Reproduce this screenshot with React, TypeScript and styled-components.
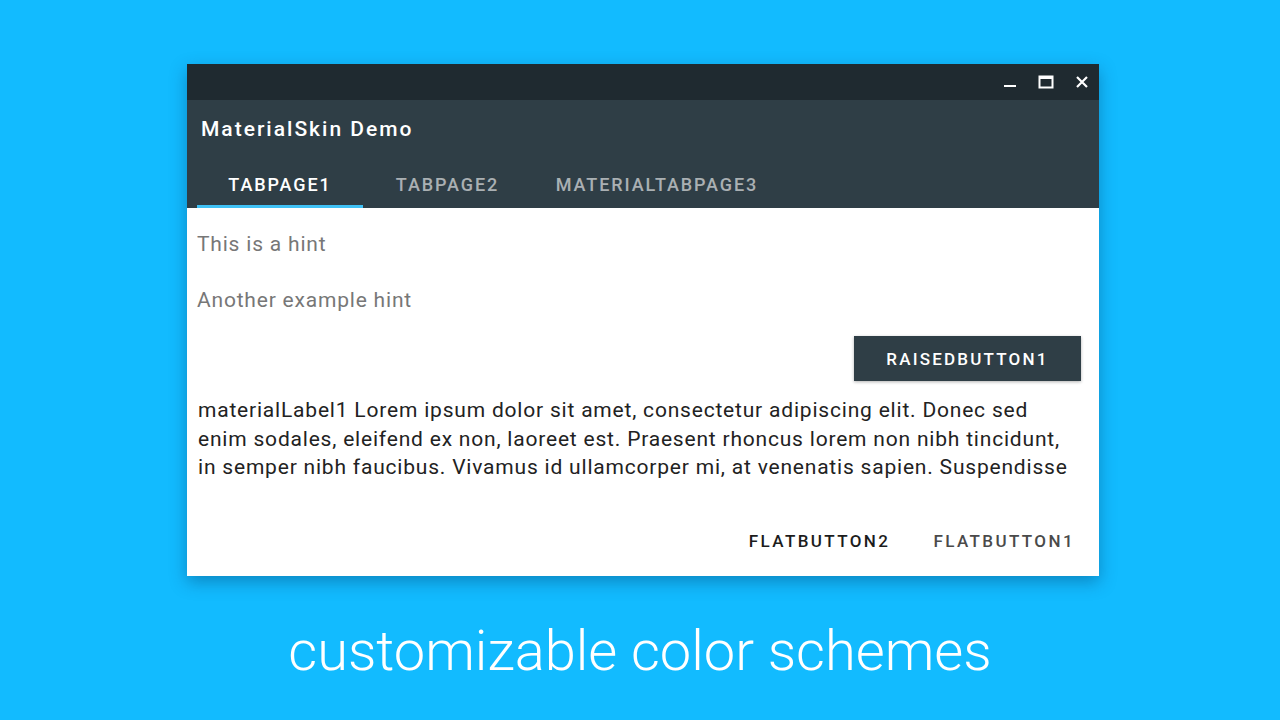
import React from "react";
import styled, { createGlobalStyle } from "styled-components";

const sky = "#12BBFF";
const title_bar = "#1F2A30";
const primary = "#2F3E46";
const accent = "#3FC1F5";

const GlobalStyle = createGlobalStyle`
    html, body {
        margin: 0;
        padding: 0;
        background: ${sky};
        font-family: Roboto, "Liberation Sans", sans-serif;
    }
`;

const Page = styled.div`
    width: 1280px;
    height: 720px;
    background: ${sky};
    display: flex;
    flex-direction: column;
    padding-top: 64px;
    box-sizing: border-box;
`;

const Window = styled.div`
    margin-left: 187px;
    width: 912px;
    height: 512px;
    background: #ffffff;
    display: flex;
    flex-direction: column;
    box-shadow: 0 6px 16px rgba(0, 40, 80, 0.35);
`;

const TitleBar = styled.div`
    height: 36px;
    background: ${title_bar};
    display: flex;
    align-items: center;
    justify-content: flex-end;
    gap: 16px;
    padding-right: 7px;
`;

const ControlButton = styled.div`
    width: 20px;
    height: 20px;
    display: flex;
    align-items: center;
    justify-content: center;
`;

const ActionBar = styled.div`
    background: ${primary};
    height: 108px;
    display: flex;
    flex-direction: column;
`;

const Title = styled.div`
    color: #ffffff;
    font-size: 21px;
    font-weight: 500;
    letter-spacing: 2px;
    padding: 17px 0 0 14px;
    height: 40px;
`;

const Tabs = styled.div`
    margin-top: auto;
    display: flex;
    padding-left: 10px;
`;

const Tab = styled.div<{ $active?: boolean; $width: number }>`
    width: ${(p) => p.$width}px;
    height: 52px;
    box-sizing: border-box;
    display: flex;
    align-items: center;
    justify-content: center;
    padding-top: 8px;
    color: ${(p) => (p.$active ? "#ffffff" : "rgba(255,255,255,0.6)")};
    font-size: 18px;
    font-weight: 500;
    letter-spacing: 1.9px;
    border-bottom: 3px solid ${(p) => (p.$active ? accent : "transparent")};
`;

const Content = styled.div`
    flex: 1;
    display: flex;
    flex-direction: column;
    padding: 24px 18px 0 10px;
`;

const Hint = styled.div`
    color: #777777;
    font-size: 21px;
    letter-spacing: 0.8px;
    height: 56px;
    line-height: 24px;
`;

const ButtonRow = styled.div`
    display: flex;
    justify-content: flex-end;
`;

const RaisedButton = styled.div`
    width: 227px;
    height: 45px;
    margin-top: -8px;
    background: ${primary};
    color: #ffffff;
    font-size: 17px;
    font-weight: 500;
    letter-spacing: 2.2px;
    display: flex;
    align-items: center;
    justify-content: center;
    box-shadow: 0 1px 3px rgba(0, 0, 0, 0.3);
`;

const Label = styled.div`
    margin-top: 15px;
    padding-left: 1px;
    color: #222222;
    font-size: 21px;
    letter-spacing: 0.8px;
    line-height: 28.5px;
`;

const Line = styled.span`
    display: block;
    white-space: nowrap;
`;

const FlatButton = styled.div<{ $dim?: boolean }>`
    padding: 0 6px 0 8px;
    height: 40px;
    display: flex;
    align-items: center;
    color: ${(p) => (p.$dim ? "#4a4a4a" : "#1c1c1c")};
    font-size: 17px;
    font-weight: 500;
    letter-spacing: 2.4px;
`;

const Footer = styled(ButtonRow)`
    margin-top: auto;
    margin-bottom: 15px;
    gap: 29px;
`;

const Caption = styled.div`
    margin-top: 45px;
    text-align: center;
    color: #ffffff;
    font-size: 56px;
    font-weight: 300;
    line-height: 60px;
`;

const Minimize = () => (
    <svg width="14" height="14" viewBox="0 0 14 14">
        <rect x="1" y="10" width="12" height="2" fill="#ffffff" />
    </svg>
);

const Maximize = () => (
    <svg width="16" height="14" viewBox="0 0 16 14">
        <rect x="1.5" y="1.5" width="13" height="11" fill="none" stroke="#ffffff" strokeWidth="2" />
        <rect x="1" y="1" width="14" height="3" fill="#ffffff" />
    </svg>
);

const Close = () => (
    <svg width="14" height="14" viewBox="0 0 14 14">
        <path d="M2 2 L12 12 M12 2 L2 12" stroke="#ffffff" strokeWidth="2.2" />
    </svg>
);

const lines = [
    "materialLabel1 Lorem ipsum dolor sit amet, consectetur adipiscing elit. Donec sed",
    "enim sodales, eleifend ex non, laoreet est. Praesent rhoncus lorem non nibh tincidunt,",
    "in semper nibh faucibus. Vivamus id ullamcorper mi, at venenatis sapien. Suspendisse",
];

export const App = () => {
    return (
        <Page>
            <GlobalStyle />
            <Window>
                <TitleBar>
                    <ControlButton>
                        <Minimize />
                    </ControlButton>
                    <ControlButton>
                        <Maximize />
                    </ControlButton>
                    <ControlButton>
                        <Close />
                    </ControlButton>
                </TitleBar>
                <ActionBar>
                    <Title>MaterialSkin Demo</Title>
                    <Tabs>
                        <Tab $active $width={166}>TABPAGE1</Tab>
                        <Tab $width={169}>TABPAGE2</Tab>
                        <Tab $width={250}>MATERIALTABPAGE3</Tab>
                    </Tabs>
                </ActionBar>
                <Content>
                    <Hint>This is a hint</Hint>
                    <Hint>Another example hint</Hint>
                    <ButtonRow>
                        <RaisedButton>RAISEDBUTTON1</RaisedButton>
                    </ButtonRow>
                    <Label>
                        {lines.map((l) => (
                            <Line key={l}>{l}</Line>
                        ))}
                    </Label>
                    <Footer>
                        <FlatButton>FLATBUTTON2</FlatButton>
                        <FlatButton $dim>FLATBUTTON1</FlatButton>
                    </Footer>
                </Content>
            </Window>
            <Caption>customizable color schemes</Caption>
        </Page>
    );
};

export default App;
